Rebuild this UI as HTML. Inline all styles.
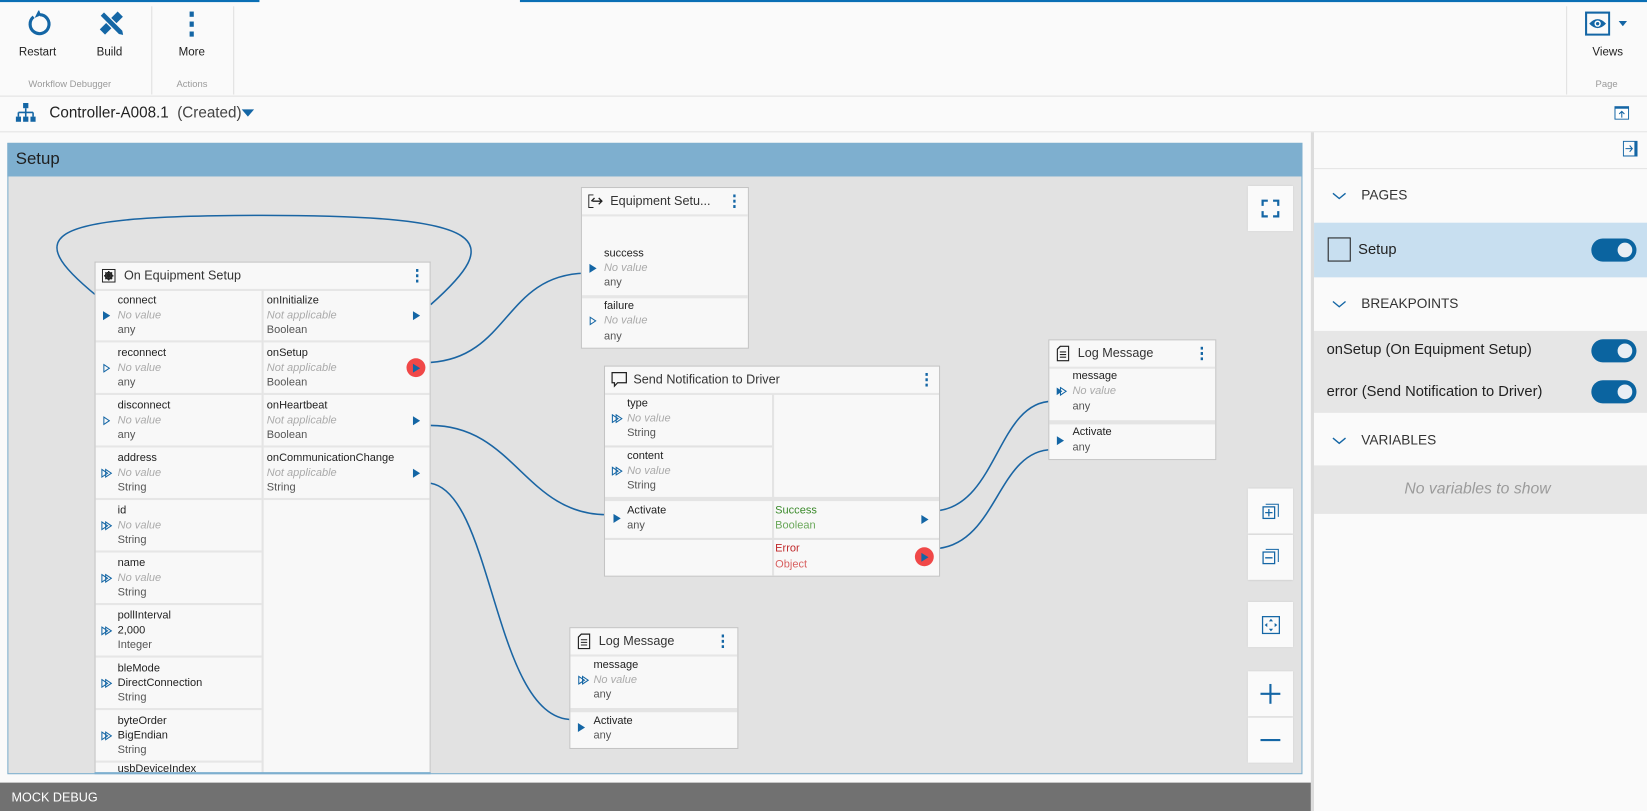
<!DOCTYPE html>
<html><head><meta charset="utf-8"><style>
html,body{margin:0;padding:0;width:1647px;height:811px;overflow:hidden;background:#fafafa}
#w{position:absolute;left:0;top:0;width:1568px;height:772px;transform:scale(1.05038,1.0505);transform-origin:0 0;font-family:"Liberation Sans",sans-serif;color:#222}
.a{position:absolute}
.t{position:absolute;white-space:nowrap;font-size:10.5px;line-height:14px}
.nm{color:#222}.nv{color:#aaa;font-style:italic}.ty{color:#555}
.nd{position:absolute;background:#f8f8f8;border:1px solid #c4c4c4;box-sizing:border-box;overflow:hidden}
.hd{position:absolute;left:0;right:0;top:0;height:25px;border-bottom:2px solid #e6e6e6;font-size:12px;line-height:25px;color:#333}
.hl{position:absolute;height:1px;background:#e2e2e2}
.btn{position:absolute;background:#fafafa;left:1188px;width:43px;box-shadow:0 0 2px rgba(0,0,0,.15)}
.tg{position:absolute;left:1515px;width:43px;height:22px;border-radius:11px;background:#0b64a0}
.tg:after{content:"";position:absolute;right:4px;top:4px;width:14px;height:14px;border-radius:50%;background:#e8eef4}
.sh{position:absolute;left:1251px;right:0;font-size:13px;color:#333}
</style></head><body><div id="w">
<svg width="0" height="0" style="position:absolute"><defs>
<symbol id="f" viewBox="0 0 8 10"><path d="M0 0L8 5L0 10Z" fill="#1466a5"/></symbol>
<symbol id="h" viewBox="0 0 8 10"><path d="M1 1L7 5L1 9Z" fill="none" stroke="#1466a5" stroke-width="1.1"/></symbol>
<symbol id="d" viewBox="0 0 12 10"><path d="M1 1L7 5L1 9Z M5 1L11 5L5 9Z" fill="none" stroke="#1466a5" stroke-width="1.1"/></symbol>
<symbol id="dd" viewBox="0 0 12 10"><path d="M1 1L7 5L1 9Z" fill="#1466a5"/><path d="M5 1L11 5L5 9Z" fill="none" stroke="#1466a5" stroke-width="1.1"/></symbol>
<symbol id="kb" viewBox="0 0 4 14"><rect x="1" y="0" width="2.4" height="3" fill="#1466a5"/><rect x="1" y="5.5" width="2.4" height="3" fill="#1466a5"/><rect x="1" y="11" width="2.4" height="3" fill="#1466a5"/></symbol>
</defs></svg>
<!-- toolbar -->
<div class="a" style="left:0;top:0;width:247px;height:1.5px;background:#0a6fb5"></div>
<div class="a" style="left:495px;top:0;width:1073px;height:1.5px;background:#0a6fb5"></div>
<svg class="a" style="left:25px;top:10px" width="25" height="25" viewBox="0 0 25 25"><path d="M7 6A9 9 0 1 0 13 4" fill="none" stroke="#1466a5" stroke-width="3"/><path d="M12 -1L14 4.5L8 7Z" fill="#1466a5"/></svg>
<svg class="a" style="left:93px;top:9px" width="26" height="26" viewBox="0 0 26 26"><path d="M2 19L19 2L24 7L7 24Z" fill="#1466a5"/><path d="M6 2L24 20L25 25L20 24L2 6Z" fill="#1466a5" stroke="#fafafa" stroke-width="1.2"/></svg>
<svg class="a" style="left:180px;top:11px" width="5" height="24" viewBox="0 0 5 24"><rect x="0.5" y="0" width="4" height="5" fill="#1466a5"/><rect x="0.5" y="9.5" width="4" height="5" fill="#1466a5"/><rect x="0.5" y="19" width="4" height="5" fill="#1466a5"/></svg>
<div class="t" style="left:18px;top:43px;font-size:11px">Restart</div>
<div class="t" style="left:92px;top:43px;font-size:11px">Build</div>
<div class="t" style="left:170px;top:43px;font-size:11px">More</div>
<div class="t" style="left:27px;top:73px;font-size:9px;color:#9a9a9a">Workflow Debugger</div>
<div class="t" style="left:168px;top:73px;font-size:9px;color:#9a9a9a">Actions</div>
<div class="a" style="left:144px;top:6px;width:1px;height:84px;background:#e0e0e0"></div>
<div class="a" style="left:222px;top:6px;width:1px;height:84px;background:#e0e0e0"></div>
<div class="a" style="left:1491px;top:6px;width:1px;height:84px;background:#e0e0e0"></div>
<svg class="a" style="left:1509px;top:11px" width="24" height="23" viewBox="0 0 24 23"><rect x="1" y="1" width="22" height="21" fill="none" stroke="#1466a5" stroke-width="2"/><path d="M4 11.5Q12 3 20 11.5Q12 20 4 11.5Z" fill="#1466a5"/><circle cx="12" cy="11.5" r="3" fill="#fff"/><circle cx="12" cy="11.5" r="1.6" fill="#1466a5"/></svg>
<svg class="a" style="left:1541px;top:20px" width="8" height="5"><path d="M0 0H8L4 5Z" fill="#1466a5"/></svg>
<div class="t" style="left:1516px;top:43px;font-size:11px">Views</div>
<div class="t" style="left:1519px;top:73px;font-size:9px;color:#9a9a9a">Page</div>
<div class="a" style="left:0;top:91px;width:1568px;height:1px;background:#e2e2e2"></div>
<svg class="a" style="left:15px;top:98px" width="19" height="18" viewBox="0 0 19 18"><rect x="7" y="0" width="5" height="5" fill="#1466a5"/><path d="M9.5 5V9M2.5 9H16.5M2.5 9V13M9.5 9V13M16.5 9V13" stroke="#1466a5" stroke-width="1.5" fill="none"/><rect x="0" y="13" width="5" height="5" fill="#1466a5"/><rect x="7" y="13" width="5" height="5" fill="#1466a5"/><rect x="14" y="13" width="5" height="5" fill="#1466a5"/></svg>
<div class="t" style="left:47px;top:100px;font-size:14.5px;line-height:17px;color:#222">Controller-A008.1 &nbsp;<span style="color:#444">(Created)</span></div>
<svg class="a" style="left:230px;top:104px" width="12" height="7"><path d="M0 0H12L6 7Z" fill="#1466a5"/></svg>
<svg class="a" style="left:1537px;top:101px" width="14" height="13" viewBox="0 0 14 13"><rect x=".5" y=".5" width="13" height="12" fill="#fff" stroke="#1466a5"/><rect x=".5" y=".5" width="13" height="2" fill="#1466a5"/><path d="M7 11V5M4.5 7.5L7 5L9.5 7.5" stroke="#1466a5" fill="none"/></svg>
<div class="a" style="left:0;top:125px;width:1568px;height:1px;background:#e2e2e2"></div>
<!-- canvas frame -->
<div class="a" style="left:7px;top:136px;width:1233px;height:601px;border:1px solid #7eafcf;background:#e2e2e2;box-sizing:border-box"></div>
<div class="a" style="left:7px;top:136px;width:1233px;height:32px;background:#7eafcf"></div>
<div class="t" style="left:15px;top:142px;font-size:16px;line-height:20px;color:#1f1f1f">Setup</div>
<div class="a" style="left:0;top:745px;width:1248px;height:27px;background:#717171"></div>
<div class="t" style="left:11px;top:752px;font-size:12px;color:#fff">MOCK DEBUG</div>
<!-- curves -->
<svg class="a" style="left:0;top:0" width="1250" height="740"><g fill="none" stroke="#1a65a3" stroke-width="1.5">
<path d="M100 288C20 225 30 205 250 205C470 205 480 228 410 290"/>
<path d="M410 345C485 340 480 262 557 260"/>
<path d="M410 405C490 405 500 490 578 490"/>
<path d="M410 460C470 470 470 685 545 685"/>
<path d="M894 486C950 478 950 382 1002 382"/>
<path d="M894 522C950 515 950 428 1002 428"/>
</g></svg>
<!-- big node -->
<div class="nd" style="left:90px;top:249px;width:320px;height:487px;border-bottom:none">
<div class="hd"><svg class="a" style="left:6px;top:6px" width="13" height="13" viewBox="0 0 13 13"><rect x=".5" y=".5" width="12" height="12" fill="none" stroke="#222"/><circle cx="6.5" cy="6.5" r="3" fill="none" stroke="#222" stroke-width="1.6"/><path d="M6.5 2V11M2 6.5H11M3.3 3.3L9.7 9.7M9.7 3.3L3.3 9.7" stroke="#222" stroke-width="1.3"/></svg><span style="position:absolute;left:27px">On Equipment Setup</span><svg class="a" style="left:304px;top:6px" width="4" height="13"><use href="#kb"/></svg></div>
<div class="a" style="left:158px;top:26px;width:2px;height:470px;background:#e4e4e4"></div>
</div>
<div id="bigrows"></div>
<!-- Equipment Setu -->
<div class="nd" style="left:553px;top:178px;width:160px;height:154px">
<div class="hd"><svg class="a" style="left:6px;top:6px" width="14" height="13" viewBox="0 0 14 13"><path d="M5 .5H.5V12.5H5" fill="none" stroke="#222"/><path d="M4 6.5H13M10 3.5L13 6.5L10 9.5M6 3.5L3 6.5" fill="none" stroke="#222" stroke-width="1.3"/></svg><span style="position:absolute;left:27px">Equipment Setu...</span><svg class="a" style="left:143px;top:6px" width="4" height="13"><use href="#kb"/></svg></div>
<div class="hl" style="left:0;right:0;top:102px;height:3px;background:#e6e6e6"></div>
</div>
<!-- Send Notification -->
<div class="nd" style="left:575px;top:348px;width:320px;height:201px">
<div class="hd"><svg class="a" style="left:6px;top:5px" width="15" height="15" viewBox="0 0 15 15"><path d="M.7.7H14.3V10.3H6L3 13.5V10.3H.7Z" fill="none" stroke="#222" stroke-width="1.2"/></svg><span style="position:absolute;left:27px">Send Notification to Driver</span><svg class="a" style="left:304px;top:6px" width="4" height="13"><use href="#kb"/></svg></div>
<div class="a" style="left:159px;top:26px;width:2px;height:180px;background:#e4e4e4"></div>
<div class="hl" style="left:0;width:159px;top:75px;height:2px"></div>
<div class="hl" style="left:0;right:0;top:124px;height:4px;background:#e4e4e4"></div>
<div class="hl" style="left:0;right:0;top:163px;height:2px"></div>
</div>
<!-- Log right -->
<div class="nd" style="left:998px;top:323px;width:160px;height:115px">
<div class="hd"><svg class="a" style="left:7px;top:5px" width="12" height="15" viewBox="0 0 12 15"><path d="M3.5 .6H11.4V14.4H.6V3.5Z" fill="none" stroke="#222" stroke-width="1.2"/><path d="M3 6H9M3 8.5H9M3 11H9" stroke="#222"/></svg><span style="position:absolute;left:27px">Log Message</span><svg class="a" style="left:143px;top:6px" width="4" height="13"><use href="#kb"/></svg></div>
<div class="hl" style="left:0;right:0;top:76px;height:4px;background:#e4e4e4"></div>
</div>
<!-- Log bottom -->
<div class="nd" style="left:542px;top:597px;width:161px;height:116px">
<div class="hd"><svg class="a" style="left:7px;top:5px" width="12" height="15" viewBox="0 0 12 15"><path d="M3.5 .6H11.4V14.4H.6V3.5Z" fill="none" stroke="#222" stroke-width="1.2"/><path d="M3 6H9M3 8.5H9M3 11H9" stroke="#222"/></svg><span style="position:absolute;left:27px">Log Message</span><svg class="a" style="left:143px;top:6px" width="4" height="13"><use href="#kb"/></svg></div>
<div class="hl" style="left:0;right:0;top:76px;height:4px;background:#e4e4e4"></div>
</div>
<div id="txt"></div>
<!-- canvas buttons -->
<div class="btn" style="top:177px;height:43px"><svg class="a" style="left:13px;top:13px" width="17" height="17" viewBox="0 0 17 17"><path d="M1 6V1H6M11 1H16V6M16 11V16H11M6 16H1V11" fill="none" stroke="#1466a5" stroke-width="2.2"/></svg></div>
<div class="btn" style="top:465px;height:43px"><svg class="a" style="left:13px;top:13px" width="18" height="18" viewBox="0 0 18 18"><path d="M4 2H16V14" fill="none" stroke="#1466a5"/><rect x="1.5" y="4.5" width="11" height="11" fill="none" stroke="#1466a5" stroke-width="1.2"/><path d="M7 6.5V13.5M3.5 10H10.5" stroke="#1466a5" stroke-width="1.2"/></svg></div>
<div class="btn" style="top:509px;height:43px"><svg class="a" style="left:13px;top:12px" width="18" height="18" viewBox="0 0 18 18"><path d="M4 2H16V14" fill="none" stroke="#1466a5"/><rect x="1.5" y="4.5" width="11" height="11" fill="none" stroke="#1466a5" stroke-width="1.2"/><path d="M3.5 10H10.5" stroke="#1466a5" stroke-width="1.2"/></svg></div>
<div class="btn" style="top:573px;height:43px"><svg class="a" style="left:13px;top:13px" width="18" height="18" viewBox="0 0 18 18"><rect x="1" y="1" width="16" height="16" fill="none" stroke="#1466a5" stroke-width="1.2"/><path d="M9 3L11 5.5H7ZM9 15L11 12.5H7ZM3 9L5.5 7V11ZM15 9L12.5 7V11Z" fill="#1466a5"/></svg></div>
<div class="btn" style="top:639px;height:43px"><svg class="a" style="left:12px;top:12px" width="19" height="19"><path d="M9.5 0V19M0 9.5H19" stroke="#1466a5" stroke-width="2"/></svg></div>
<div class="btn" style="top:683px;height:43px"><svg class="a" style="left:12px;top:12px" width="19" height="19"><path d="M0 9.5H19" stroke="#1466a5" stroke-width="2"/></svg></div>
<!-- right panel -->
<div class="a" style="left:1248px;top:126px;width:3px;height:646px;background:#dcdcdc"></div>
<div class="a" style="left:1251px;top:126px;width:317px;height:646px;background:#fafafa"></div>
<svg class="a" style="left:1545px;top:134px" width="14" height="15" viewBox="0 0 14 15"><rect x=".5" y=".5" width="13" height="14" fill="none" stroke="#1466a5"/><rect x="11" y=".5" width="2.5" height="14" fill="#1466a5"/><path d="M2.5 7.5H9M6.5 4.5L9 7.5L6.5 10.5" fill="none" stroke="#1466a5"/></svg>
<div class="a" style="left:1251px;top:160px;width:317px;height:1px;background:#e4e4e4"></div>
<svg class="a" style="left:1268px;top:183px" width="14" height="8"><path d="M1 1L7 6L13 1" fill="none" stroke="#1466a5" stroke-width="1.3"/></svg>
<div class="t" style="left:1296px;top:178px;font-size:13px;line-height:16px;color:#333">PAGES</div>
<div class="a" style="left:1251px;top:212px;width:317px;height:52px;background:#c8dff0"></div>
<div class="a" style="left:1264px;top:226px;width:20px;height:21px;border:1px solid #222"></div>
<div class="t" style="left:1293px;top:229px;font-size:14px;line-height:17px">Setup</div>
<div class="tg" style="top:227px"></div>
<svg class="a" style="left:1268px;top:286px" width="14" height="8"><path d="M1 1L7 6L13 1" fill="none" stroke="#1466a5" stroke-width="1.3"/></svg>
<div class="t" style="left:1296px;top:281px;font-size:13px;line-height:16px;color:#333">BREAKPOINTS</div>
<div class="a" style="left:1251px;top:315px;width:317px;height:78px;background:#e6e6e6"></div>
<div class="t" style="left:1263px;top:324px;font-size:14px;line-height:17px">onSetup (On Equipment Setup)</div>
<div class="t" style="left:1263px;top:364px;font-size:14px;line-height:17px">error (Send Notification to Driver)</div>
<div class="tg" style="top:323px"></div>
<div class="tg" style="top:362px"></div>
<svg class="a" style="left:1268px;top:416px" width="14" height="8"><path d="M1 1L7 6L13 1" fill="none" stroke="#1466a5" stroke-width="1.3"/></svg>
<div class="t" style="left:1296px;top:411px;font-size:13px;line-height:16px;color:#333">VARIABLES</div>
<div class="a" style="left:1251px;top:443px;width:317px;height:45px;background:#e6e6e6"></div>
<div class="t" style="left:1337px;top:457px;font-size:15px;line-height:18px;color:#9b9b9b;font-style:italic">No variables to show</div>
<div class="a" style="left:1251px;top:488px;width:317px;height:1px;background:#e0e0e0"></div>
<script>
(function(){
var W=document.getElementById('w'),h='';
function ar(k,x,y){var w=(k=='d'||k=='dd')?11:7;h+='<svg class="a" style="left:'+x+'px;top:'+(y-4.5)+'px" width="'+w+'" height="9"><use href="#'+k+'"/></svg>';}
function t(x,y,s,c,st){h+='<div class="t '+c+'" style="left:'+x+'px;top:'+(y-7)+'px;'+(st||'')+'">'+s+'</div>';}
function ln(x,y,w,hh,c){h+='<div class="a" style="left:'+x+'px;top:'+y+'px;width:'+w+'px;height:'+(hh||2)+'px;background:'+(c||'#e6e6e6')+'"></div>';}
var L=[['connect','No value','any','f',1],['reconnect','No value','any','h',1],['disconnect','No value','any','h',1],['address','No value','String','d',1],['id','No value','String','d',1],['name','No value','String','d',1],['pollInterval','2,000','Integer','d',0],['bleMode','DirectConnection','String','d',0],['byteOrder','BigEndian','String','d',0]];
for(var i=0;i<L.length;i++){var r=276+50*i;t(112,r+10,L[i][0],'nm');t(112,r+24,L[i][1],L[i][4]?'nv':'nm');t(112,r+38,L[i][2],'ty');ar(L[i][3],L[i][3]=='d'?96:98,r+24);ln(91,r+48,158);}
t(112,732,'usbDeviceIndex','nm');
var R=[['onInitialize'],['onSetup'],['onHeartbeat'],['onCommunicationChange']];
for(var i=0;i<4;i++){var r=276+50*i;t(254,r+10,R[i][0],'nm');t(254,r+24,'Not applicable','nv');t(254,r+38,i==3?'String':'Boolean','ty');ln(251,r+48,158);if(i==1){h+='<div class="a" style="left:387px;top:'+(r+15)+'px;width:18px;height:18px;border-radius:50%;background:#f04848"></div>';}ar('f',393,r+24);}
h+='<div class="a" style="left:90px;top:735px;width:320px;height:2px;background:#7eafcf"></div>';
// equipment
t(575,241,'success','nm');t(575,255,'No value','nv');t(575,269,'any','ty');ar('f',561,255);
t(575,291,'failure','nm');t(575,305,'No value','nv');t(575,320,'any','ty');ar('h',561,305);
// send
t(597,384,'type','nm');t(597,398,'No value','nv');t(597,412,'String','ty');ar('d',582,398);
t(597,434,'content','nm');t(597,448,'No value','nv');t(597,462,'String','ty');ar('d',582,448);
t(597,486,'Activate','nm');t(597,500,'any','ty');ar('f',584,493);
t(738,486,'Success','',"color:#3b8a2b");t(738,500,'Boolean','',"color:#6aa85a");ar('f',877,494);
t(738,522,'Error','',"color:#c0282a");t(738,537,'Object','',"color:#d86060");
h+='<div class="a" style="left:871px;top:521px;width:18px;height:18px;border-radius:50%;background:#f04848"></div>';ar('f',877,530);
// log right
t(1021,358,'message','nm');t(1021,372,'No value','nv');t(1021,387,'any','ty');ar('dd',1005,372);
t(1021,411,'Activate','nm');t(1021,426,'any','ty');ar('f',1006,419);
// log bottom
t(565,633,'message','nm');t(565,647,'No value','nv');t(565,661,'any','ty');ar('d',550,647);
t(565,686,'Activate','nm');t(565,700,'any','ty');ar('f',550,692);
document.getElementById('txt').outerHTML=h;
})();
</script>
</div></body></html>
